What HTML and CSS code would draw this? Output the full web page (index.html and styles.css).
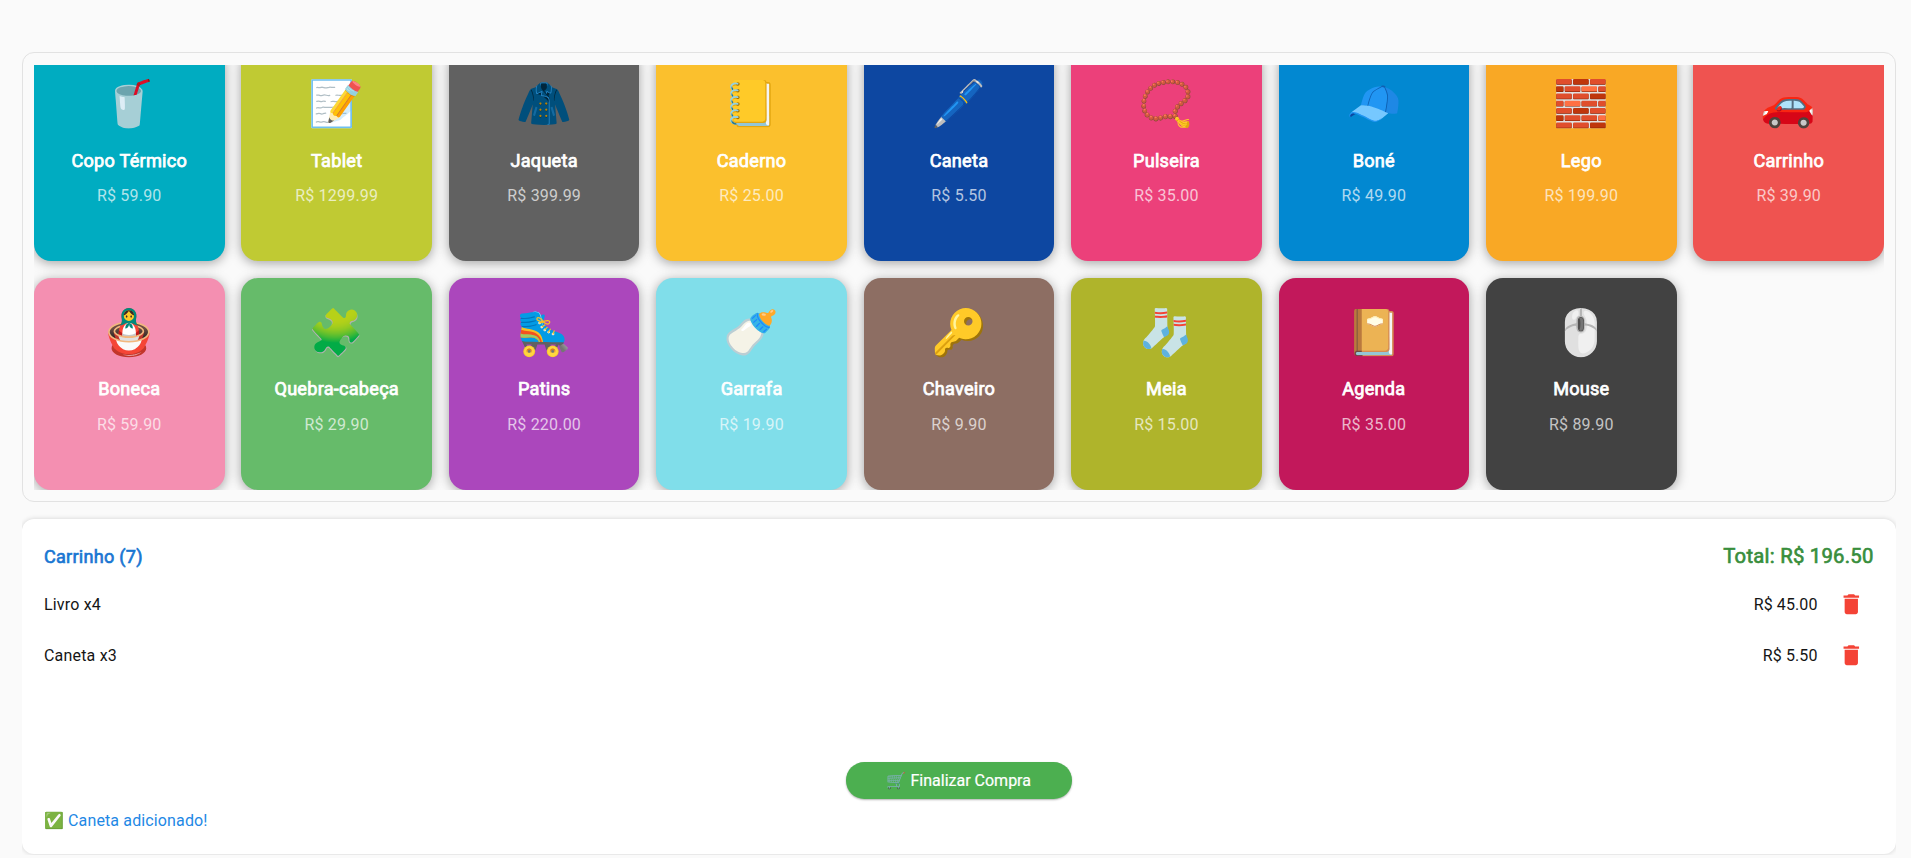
FILE: index.html
```
<!DOCTYPE html>
<html lang="pt-BR">
<head>
<meta charset="utf-8">
<title>Loja</title>
<link rel="stylesheet" href="styles.css">
</head>
<body>
<main class="page">
  <section class="catalog">
    <div class="viewport">
      <div class="grid">
        <article class="card cyan"><div class="emoji">🥤</div><h2 class="name">Copo Térmico</h2><p class="price">R$ 59.90</p></article>
        <article class="card lime"><div class="emoji">📝</div><h2 class="name">Tablet</h2><p class="price">R$ 1299.99</p></article>
        <article class="card gray"><div class="emoji">🧥</div><h2 class="name">Jaqueta</h2><p class="price">R$ 399.99</p></article>
        <article class="card yellow"><div class="emoji">📒</div><h2 class="name">Caderno</h2><p class="price">R$ 25.00</p></article>
        <article class="card navy"><div class="emoji">🖊️</div><h2 class="name">Caneta</h2><p class="price">R$ 5.50</p></article>
        <article class="card pink"><div class="emoji">📿</div><h2 class="name">Pulseira</h2><p class="price">R$ 35.00</p></article>
        <article class="card blue"><div class="emoji">🧢</div><h2 class="name">Boné</h2><p class="price">R$ 49.90</p></article>
        <article class="card orange"><div class="emoji">🧱</div><h2 class="name">Lego</h2><p class="price">R$ 199.90</p></article>
        <article class="card red"><div class="emoji">🚗</div><h2 class="name">Carrinho</h2><p class="price">R$ 39.90</p></article>
        <article class="card rose"><div class="emoji">🪆</div><h2 class="name">Boneca</h2><p class="price">R$ 59.90</p></article>
        <article class="card green"><div class="emoji">🧩</div><h2 class="name">Quebra-cabeça</h2><p class="price">R$ 29.90</p></article>
        <article class="card purple"><div class="emoji">🛼</div><h2 class="name">Patins</h2><p class="price">R$ 220.00</p></article>
        <article class="card aqua"><div class="emoji">🍼</div><h2 class="name">Garrafa</h2><p class="price">R$ 19.90</p></article>
        <article class="card brown"><div class="emoji">🔑</div><h2 class="name">Chaveiro</h2><p class="price">R$ 9.90</p></article>
        <article class="card olive"><div class="emoji">🧦</div><h2 class="name">Meia</h2><p class="price">R$ 15.00</p></article>
        <article class="card magenta"><div class="emoji">📔</div><h2 class="name">Agenda</h2><p class="price">R$ 35.00</p></article>
        <article class="card dark"><div class="emoji">🖱️</div><h2 class="name">Mouse</h2><p class="price">R$ 89.90</p></article>
      </div>
    </div>
  </section>
  <div class="cart-clip">
    <section class="cart">
      <header class="cart-head"><span class="cart-title">Carrinho (7)</span><span class="total">Total: R$ 196.50</span></header>
      <ul class="items">
        <li class="item"><span class="item-name">Livro x4</span><span class="item-price">R$ 45.00</span><svg class="trash" viewBox="0 0 24 24"><path d="M6 19c0 1.1.9 2 2 2h8c1.1 0 2-.9 2-2V7H6v12zM19 4h-3.500l-1-1h-5l-1 1H5v2h14V4z"/></svg></li>
        <li class="item"><span class="item-name">Caneta x3</span><span class="item-price">R$ 5.50</span><svg class="trash" viewBox="0 0 24 24"><path d="M6 19c0 1.1.9 2 2 2h8c1.1 0 2-.9 2-2V7H6v12zM19 4h-3.500l-1-1h-5l-1 1H5v2h14V4z"/></svg></li>
      </ul>
      <button class="checkout"><span class="checkout-icon">🛒</span> Finalizar Compra</button>
      <p class="status">✅ <span>Caneta adicionado!</span></p>
    </section>
  </div>
</main>
</body>
</html>
```

FILE: styles.css
```
* { box-sizing: border-box; }
body {
  margin: 0;
  height: 858px;
  overflow: hidden;
  background: #fafafa;
  font: 16px/20px Roboto, "Noto Color Emoji", sans-serif;
  letter-spacing: 0.2px;
}
h2, p, ul { margin: 0; padding: 0; }
.page { padding: 52px 15px 0 21.5px; }
.catalog {
  height: 450px;
  padding: 12px 11px 11px 11.5px;
  border: 1px solid #e2e2e2;
  border-radius: 12px;
}
.viewport {
  height: 425px;
  display: flex;
  align-items: flex-end;
  overflow: hidden;
}
.grid {
  flex: 1;
  display: grid;
  grid-template-columns: repeat(9, 1fr);
  grid-auto-rows: 212px;
  gap: 16.6px 16.9px;
}
.card {
  display: flex;
  flex-direction: column;
  align-items: center;
  padding-top: 27px;
  border-radius: 17px;
  color: #fff;
  box-shadow: 0 2px 12px rgba(0, 0, 0, 0.36);
}
.emoji { font-size: 44.8px; line-height: 56px; letter-spacing: 0; }
.name {
  margin-top: 16.25px;
  font-size: 18.13px;
  font-weight: 400;
  line-height: 24px;
  letter-spacing: 0.25px;
  -webkit-text-stroke: 0.75px currentColor;
}
.price { margin-top: 13.75px; color: rgba(255, 255, 255, 0.7); }
.cyan { background: #00acc1; }
.lime { background: #c0ca33; }
.gray { background: #616161; }
.yellow { background: #fbc02d; }
.navy { background: #0d47a1; }
.pink { background: #ec407a; }
.blue { background: #0288d1; }
.orange { background: #f9a825; }
.red { background: #ef5350; }
.rose { background: #f48fb1; }
.green { background: #66bb6a; }
.purple { background: #ab47bc; }
.aqua { background: #80deea; }
.brown { background: #8d6e63; }
.olive { background: #afb42b; }
.magenta { background: #c2185b; }
.dark { background: #424242; }

.cart-clip { padding-top: 17px; height: 353px; overflow: hidden; }
.cart {
  height: 335px;
  padding: 23px 22.4px 0;
  display: flex;
  flex-direction: column;
  background: #fff;
  border-radius: 12px;
  box-shadow: 0 0 5px rgba(0, 0, 0, 0.16);
}
.cart-head {
  display: flex;
  justify-content: space-between;
  align-items: baseline;
  height: 37px;
  line-height: 28px;
  letter-spacing: 0.25px;
  -webkit-text-stroke: 0.65px currentColor;
}
.cart-title { font-size: 18.13px; color: #1976d2; }
.total { font-size: 20.27px; color: #388e3c; }
.items { height: 183px; list-style: none; color: #151515; }
.item { display: flex; align-items: center; height: 51px; }
.item-name { flex: 1; }
.item-price { letter-spacing: 0.1px; }
.trash { width: 26.6px; height: 26.6px; margin: 0 9px 0 20.5px; fill: #f44336; }
.checkout {
  align-self: center;
  width: 225.5px;
  height: 36.5px;
  padding: 1px 0 0;
  border: 0;
  border-radius: 18.25px;
  background: #4caf50;
  color: #fff;
  font: 16px/20px Roboto, "Noto Color Emoji", sans-serif;
  -webkit-text-stroke: 0.2px currentColor;
  box-shadow: 0 1px 2px rgba(0, 0, 0, 0.3);
}
.checkout-icon { opacity: 0.75; }
.status { margin-top: 12px; color: #1e88e5; letter-spacing: 0.13px; }
```
